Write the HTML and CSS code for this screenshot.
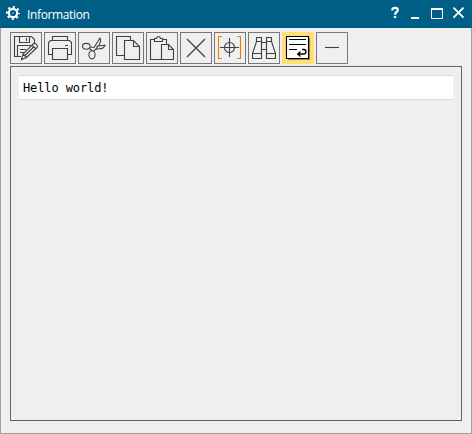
FILE: index.html
```
<!DOCTYPE html>
<html lang="en">
<head>
<meta charset="utf-8">
<title>Information</title>
<link rel="stylesheet" href="styles.css">
</head>
<body>
<div class="window">
  <header class="titlebar">
    <svg class="gear" viewBox="0 0 14 14"><circle cx="7" cy="7" r="4.2" fill="none" stroke="#fff" stroke-width="2.2"/><circle cx="7" cy="7" r="6" fill="none" stroke="#fff" stroke-width="2" stroke-dasharray="2.1 2.612" stroke-dashoffset="1.05"/><circle cx="7" cy="7" r=".8" fill="#fff" opacity=".6"/></svg>
    <h1 class="title">Information</h1>
    <svg class="controls" viewBox="0 0 80 28" fill="none" stroke="#fff">
      <path d="M4.300 10.400V9.800Q4.500 7.800 7 7.800Q9.800 7.800 9.800 10Q9.800 11.300 8.300 12.200Q7 13 7 14.700" stroke-width="2.200"/>
      <path d="M5.800 17H8.200" stroke-width="2.200"/>
      <path d="M23 18H31" stroke-width="2"/>
      <path d="M43.500 9V18.500H54.500V9" /><path d="M43 9H55" stroke-width="2"/>
      <path d="M65.500 7.700L75.500 17.700M75.500 7.700L65.500 17.700" stroke-width="1.800"/>
    </svg>
  </header>
  <main class="content">
    <nav class="toolbar">
      <button class="tool" aria-label="Save"><svg viewBox="0 0 32 32"><path d="M11 24.500H4.500V4.500H21.500L24.500 7.500V13M9.500 4.500V10.500H19.500V4.500M16.500 6V9M7.500 24V13.500H21.500M10 17.500H16M10 20.500H14"/><path class="paper" d="M11.500 27.500L13 22L23.500 11.500Q25.500 11 27 13Q28 14.500 27 15.500L16.500 25.500ZM13 22L16.500 25.500M22 13L25.800 16.800M15 23.500L24 14.500"/></svg></button>
      <button class="tool" aria-label="Print"><svg viewBox="0 0 32 32"><path d="M8.500 8.500V4.500H23.500V8.500M8.500 22.500H4.500V10.500L6.500 8.500H25.500L27.500 10.500V22.500H23.500M8.500 16.500H23.500V27.500H8.500ZM21 13.500H24"/></svg></button>
      <button class="tool" aria-label="Cut"><svg viewBox="0 0 32 32"><ellipse cx="8.300" cy="14.300" rx="3.800" ry="2.900"/><ellipse cx="14" cy="22.800" rx="3.100" ry="4.100"/><path d="M12 15L16 15.500L22 6Q23.700 8.500 21 13L16.500 18.500L14.700 18.700M18.500 14.200L27 13.200Q25.500 17 20.500 16.700L17 17.500M11.500 16.500L14 18.500"/></svg></button>
      <button class="tool" aria-label="Copy"><svg viewBox="0 0 32 32"><path d="M12 23.500H4.500V4.500H18.500V8M21.500 8.500H12.500V27.500H27.500V14.500L21.500 8.500V14.500H27.500"/></svg></button>
      <button class="tool" aria-label="Paste"><svg viewBox="0 0 32 32"><path d="M15 27.500H4.500V7.500H8M17 7.500H20.500V12M8.500 9.500V6.500H10.500Q11 4.500 12.500 4.500Q14 4.500 14.500 6.500H16.500V9.500ZM22.500 12.500H15.500V27.500H27.500V17.500L22.500 12.500V17.500H27.500"/></svg></button>
      <button class="tool" aria-label="Delete"><svg viewBox="0 0 32 32"><path class="cross" d="M7 7L25 25M25 7L7 25"/></svg></button>
      <button class="tool" aria-label="Focus"><svg viewBox="0 0 32 32"><path class="bracket" d="M8 4.500H4.500V26.500H8M23 4.500H26.500V26.500H23"/><circle cx="15.500" cy="15.500" r="5"/><path d="M6 15.500H25M15.500 6V25"/></svg></button>
      <button class="tool" aria-label="Find"><svg viewBox="0 0 32 32"><path d="M8.500 9.500V5.500H13.500V26.500H4.500V21.500L8.500 9.500H13.500M4.500 21.500H13.500M18.500 9.500V5.500H23.500V9.500L27.500 21.500V26.500H18.500V9.500H23.500M18.500 21.500H27.500M13.500 10.500H18.500M13.500 17.500H18.500"/></svg></button>
      <button class="tool active" aria-label="Wrap lines"><svg viewBox="0 0 32 32"><path class="shade" d="M6 27.500H27.500V6"/><path class="paper" d="M4.500 4.500H26.500V26.500H4.500Z"/><path d="M7 7.500H24M7 12.500H24M7 17.500H15"/><path class="turn" d="M20 17.500H22Q24 17.700 24 19.800Q24 22 21.500 22H16M18.500 19.500L15.700 22L18.500 24.500"/></svg></button>
      <button class="tool" aria-label="Minimize"><svg viewBox="0 0 32 32"><path d="M9 15.500H23"/></svg></button>
    </nav>
    <section class="panel"><pre class="output">Hello world!</pre></section>
  </main>
</div>
</body>
</html>
```
FILE: styles.css
```
* { box-sizing: border-box; }
body { margin: 0; }
.window {
  display: flex;
  flex-direction: column;
  height: 100vh;
  background: #efefef;
}
.titlebar {
  display: flex;
  flex: none;
  height: 28px;
  padding: 0 1px 0 6px;
  background: #005f87;
}
.gear { width: 14px; height: 14px; margin-top: 6px; }
.title {
  flex: 1;
  margin: 0 0 0 7px;
  color: #fff;
  font: 400 12px/30px "Open Sans", sans-serif;
  letter-spacing: -0.37px;
}
.controls { width: 80px; height: 28px; margin-right: 3px; }
.content {
  display: flex;
  flex: 1;
  flex-direction: column;
  gap: 2px;
  padding: 4px 9px 12px;
  border: 1px solid #a0a0a0;
  border-top: 0;
}
.toolbar { display: flex; gap: 2px; }
.tool {
  width: 32px;
  height: 32px;
  padding: 0;
  border: 1px solid #777;
  background: #efefef;
}
.tool svg {
  display: block;
  width: 32px;
  height: 32px;
  margin: -1px;
  fill: none;
  stroke: #404040;
  stroke-width: 1.1;
}
.tool .bracket { stroke: #f07d00; }
.tool .cross { stroke-width: 1.3; }
.tool .paper { fill: #efefef; }
.active { border-color: #ffdf77; background: #ffdf77; }
.active svg { stroke: #000; }
.active .paper { fill: #fff; }
.active .shade { stroke: #96844b; }
.active .turn { stroke-width: 1.3; }
.panel { flex: 1; padding: 8px; border: 1px solid #646464; }
.output {
  height: 25px;
  margin: 0;
  padding: 0 4px;
  border: 1px solid #dcdcdc;
  border-width: 1px 0;
  background: #fff;
  color: #000;
  font: 12px/24px "DejaVu Sans Mono", monospace;
  letter-spacing: -0.1px;
}
```
